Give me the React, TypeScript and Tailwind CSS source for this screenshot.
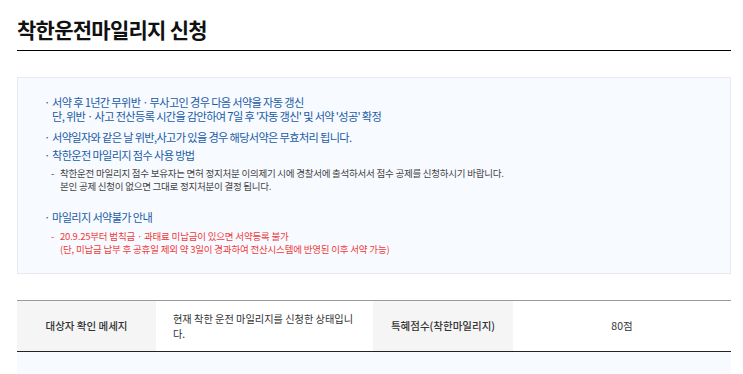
export default function App() {
  const font = { fontFamily: '"Noto Sans CJK KR", "Noto Sans", sans-serif' };

  return (
    <main className="min-h-screen bg-white" style={font}>
      <div className="ml-[17px] w-[714px]">
        {/* 제목 */}
        <h1 className="pt-[15px] pb-[7px] text-[21px] leading-[28px] font-bold tracking-[-0.035em] text-[#111] border-b border-black">
          착한운전마일리지 신청
        </h1>

        {/* 안내 박스 */}
        <div className="mt-[26px] bg-[#f7faff] border border-[#e6eaf0] pt-[17px] pb-[17px] pl-[26px] text-[11.2px] tracking-[-0.058em]">
          <div className="flex text-[#1a5aa6] leading-[14px]">
            <span className="w-[8px] shrink-0">·</span>
            <p>
              서약 후 1년간 무위반 · 무사고인 경우 다음 서약을 자동 갱신
              <br />
              단, 위반 · 사고 전산등록 시간을 감안하여 7일 후 '자동 갱신' 및 서약 '성공' 확정
            </p>
          </div>
          <div className="flex mt-[7px] text-[#1a5aa6] leading-[14px]">
            <span className="w-[8px] shrink-0">·</span>
            <p>서약일자와 같은 날 위반,사고가 있을 경우 해당서약은 무효처리 됩니다.</p>
          </div>
          <div className="flex mt-[4px] text-[#1a5aa6] leading-[14px]">
            <span className="w-[8px] shrink-0">·</span>
            <p>착한운전 마일리지 점수 사용 방법</p>
          </div>
          <div className="flex mt-[5px] pl-[7px] text-[9.5px] leading-[13px] tracking-[-0.025em] text-[#444]">
            <span className="w-[9px] shrink-0">-</span>
            <p>
              착한운전 마일리지 점수 보유자는 면허 정지처분 이의제기 시에 경찰서에 출석하서서 점수 공제를 신청하시기 바랍니다.
              <br />
              본인 공제 신청이 없으면 그대로 정지처분이 결정 됩니다.
            </p>
          </div>
          <div className="flex mt-[17px] text-[#1a5aa6] leading-[14px]">
            <span className="w-[8px] shrink-0">·</span>
            <p>마일리지 서약불가 안내</p>
          </div>
          <div className="flex mt-[6px] pl-[7px] text-[9.5px] leading-[13px] tracking-[-0.02em] text-[#f03a3a]">
            <span className="w-[9px] shrink-0">-</span>
            <p>
              20.9.25부터 범칙금 · 과태료 미납금이 있으면 서약등록 불가
              <br />
              (단, 미납금 납부 후 공휴일 제외 약 3일이 경과하여 전산시스템에 반영된 이후 서약 가능)
            </p>
          </div>
        </div>

        {/* 대상자 확인 */}
        <div className="mt-[26px] grid grid-cols-[139px_217px_140px_218px] h-[52px] border-t border-[#9a9a9a] border-b border-b-[#222] text-[10.5px] text-[#333]">
          <div className="bg-[#f5f5f5] flex items-center justify-center font-medium">대상자 확인 메세지</div>
          <div className="flex items-center pl-[17px] pr-[14px] text-[10.2px] leading-[15px]">현재 착한 운전 마일리지를 신청한 상태입니다.</div>
          <div className="bg-[#f5f5f5] flex items-center justify-center font-medium">특혜점수(착한마일리지)</div>
          <div className="flex items-center justify-center">80점</div>
        </div>

        <div className="h-[40px] bg-[#f7faff]"></div>
      </div>
    </main>
  );
}
